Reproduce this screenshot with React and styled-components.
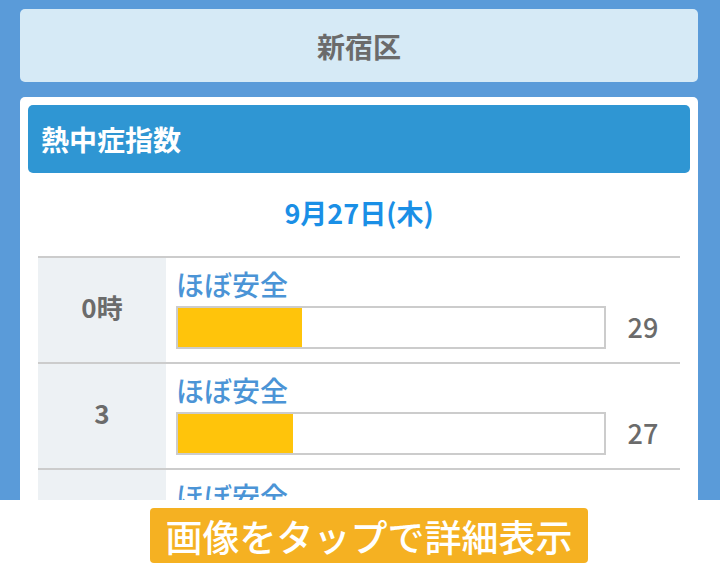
import React from "react";
import styled, { createGlobalStyle } from "styled-components";

const Global = createGlobalStyle`
  html, body { margin: 0; padding: 0; }
  body {
    background: #5a9bd9;
    font-family: "Noto Sans CJK JP", "Noto Sans", sans-serif;
  }
`;

const Page = styled.div`
  padding: 9px 22px 80px 20px;
  display: flex;
  flex-direction: column;
  gap: 15px;
`;

const AreaCard = styled.div`
  height: 73px;
  border-radius: 5px;
  background: #d6eaf6;
  display: flex;
  align-items: center;
  justify-content: center;
  color: #6b6b6b;
  font-size: 28px;
  font-weight: 700;
`;

const Card = styled.div`
  background: #fff;
  border-radius: 5px;
  padding: 8px;
`;

const CardHeader = styled.div`
  height: 68px;
  border-radius: 5px;
  background: #2f96d3;
  color: #fff;
  font-size: 28px;
  font-weight: 700;
  display: flex;
  align-items: center;
  padding-left: 13px;
`;

const DateLine = styled.div`
  text-align: center;
  color: #1a8fe6;
  font-size: 27px;
  font-weight: 700;
  line-height: 40px;
  padding: 20px 0 23px;
`;

const Table = styled.div`
  margin: 0 10px;
  border-top: 2px solid #cccccc;
`;

const Row = styled.div`
  display: flex;
  border-bottom: 2px solid #cccccc;
`;

const HourCell = styled.div`
  width: 128px;
  flex: none;
  background: #edf1f4;
  display: flex;
  align-items: center;
  justify-content: center;
  color: #6b6b6b;
  font-size: 26px;
  font-weight: 700;
  padding-bottom: 8px;
  box-sizing: border-box;
`;

const InfoCell = styled.div`
  flex: 1;
  padding: 7px 0 13px 10px;
  display: flex;
  flex-direction: column;
`;

const Level = styled.div`
  color: #4b94d6;
  font-size: 28px;
  font-weight: 500;
  line-height: 38px;
`;

const BarLine = styled.div`
  display: flex;
  align-items: center;
  margin-top: 3px;
`;

const BarTrack = styled.div`
  flex: 1;
  height: 39px;
  border: 2px solid #cccccc;
  background: #fff;
  display: flex;
`;

const BarFill = styled.div`
  background: #ffc40b;
  height: 100%;
`;

const Value = styled.div`
  width: 74px;
  text-align: center;
  color: #6b6b6b;
  font-size: 27px;
  font-weight: 500;
  padding-bottom: 3px;
`;

const Footer = styled.div`
  position: fixed;
  left: 0;
  right: 0;
  bottom: 0;
  height: 65px;
  background: #fff;
  display: flex;
  justify-content: center;
  align-items: flex-start;
  padding: 8px 0 0 18px;
  box-sizing: border-box;
`;

const TapButton = styled.div`
  width: 438px;
  height: 55px;
  border-radius: 4px;
  background: #f5b122;
  color: #fff;
  font-size: 37px;
  font-weight: 500;
  display: flex;
  align-items: center;
  justify-content: center;
`;

const rows = [
  { hour: "0時", level: "ほぼ安全", value: 29 },
  { hour: "3", level: "ほぼ安全", value: 27 },
  { hour: "6", level: "ほぼ安全", value: 26 },
];

export default function App() {
  return (
    <>
      <Global />
      <Page>
        <AreaCard>新宿区</AreaCard>
        <Card>
          <CardHeader>熱中症指数</CardHeader>
          <DateLine>9月27日(木)</DateLine>
          <Table>
            {rows.map((r, i) => (
              <Row key={i}>
                <HourCell>{r.hour}</HourCell>
                <InfoCell>
                  <Level>{r.level}</Level>
                  <BarLine>
                    <BarTrack>
                      <BarFill style={{ width: `${r.value}%` }} />
                    </BarTrack>
                    <Value>{r.value}</Value>
                  </BarLine>
                </InfoCell>
              </Row>
            ))}
          </Table>
        </Card>
      </Page>
      <Footer>
        <TapButton>画像をタップで詳細表示</TapButton>
      </Footer>
    </>
  );
}
